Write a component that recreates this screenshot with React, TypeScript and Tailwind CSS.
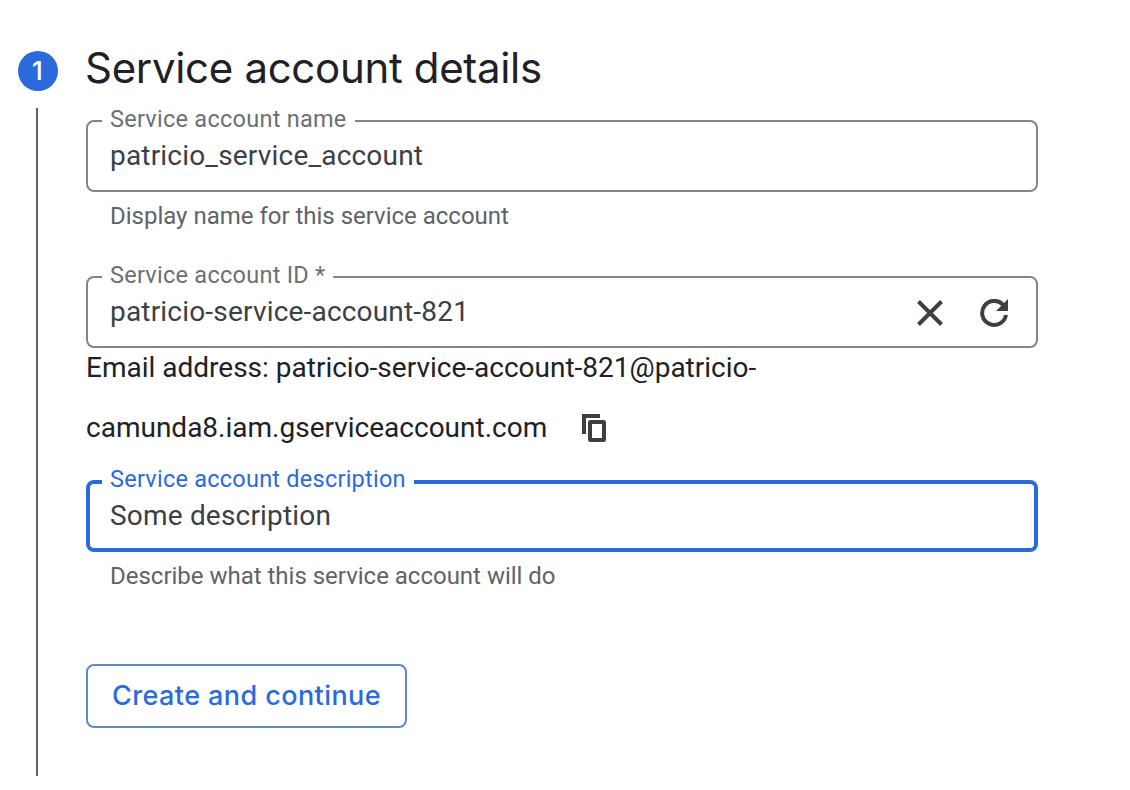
import type { ReactNode } from "react";

function CloseIcon() {
  return (
    <svg width="26" height="26" viewBox="0 0 26 26" fill="none" stroke="#3c4043" strokeWidth="4">
      <path d="M1.5 1.5 24.5 24.5M24.5 1.5 1.5 24.5" />
    </svg>
  );
}

function RefreshIcon() {
  return (
    <svg width="28" height="28" viewBox="0 0 28 28">
      <path d="M23.4 6.2A12 12 0 1 0 26 16" fill="none" stroke="#3c4043" strokeWidth="4" />
      <path d="M28 0V12H16Z" fill="#3c4043" />
    </svg>
  );
}

function CopyIcon() {
  return (
    <svg width="24" height="28" viewBox="0 0 24 28" fill="none" stroke="#3c4043">
      <path d="M18 2H2V20" strokeWidth="4" />
      <rect x="8" y="8" width="14" height="18" rx="0.5" strokeWidth="4" />
    </svg>
  );
}

type FieldProps = { label: string; value: string; focused?: boolean; actions?: ReactNode };

function Field({ label, value, focused, actions }: FieldProps) {
  return (
    <fieldset
      className={
        focused
          ? "h-[82px] w-full rounded-[8px] border-4 border-[#2a6adb] pl-3"
          : "h-[83px] w-full rounded-[8px] border-2 border-[#80868b] pl-3.5"
      }
    >
      <legend
        className={
          focused
            ? "h-6 px-2 text-[23.5px] leading-[18px] tracking-[0.24px] text-[#2a6adb]"
            : "h-6 px-2 text-[23.5px] leading-5 tracking-[0.26px] text-[#6b7075]"
        }
      >
        {label}
      </legend>
      <div className={focused ? "flex h-11 items-center justify-between pl-2" : "flex h-[46px] items-center justify-between pr-7 pl-2"}>
        <span className="text-[28px] leading-8 tracking-[0.19px] text-[#3c4043]">{value}</span>
        {actions}
      </div>
    </fieldset>
  );
}

export default function App() {
  return (
    <main className="flex h-[790px] w-[1130px] bg-white font-['Roboto',sans-serif]">
      <div className="flex w-[86px] shrink-0 flex-col pt-[51px] pl-[18px]">
        <div className="flex size-10 items-center justify-center rounded-full bg-[#2a6adb] pr-px pb-0.5 font-['Inter',sans-serif] text-[26px] font-medium text-white">
          1
        </div>
        <div className="mt-[17px] ml-[18px] h-[668px] w-0.5 bg-[#5f6368]" />
      </div>
      <div className="flex w-[952px] flex-col">
        <h1 className="mt-[40px] -ml-px h-[69px] font-['Inter',sans-serif] text-[42px] leading-[56px] font-normal tracking-[-0.32px] whitespace-nowrap text-[#202124]">
          Service account details
        </h1>
        <Field label="Service account name" value="patricio_service_account" />
        <p className="mt-2 h-8 pl-6 text-[24px] leading-8 tracking-[-0.01px] text-[#5f6368]">Display name for this service account</p>
        <div className="h-[33px]" />
        <Field
          label="Service account ID *"
          value="patricio-service-account-821"
          actions={
            <div className="flex items-center gap-[37px] pt-0.5">
              <CloseIcon />
              <RefreshIcon />
            </div>
          }
        />
        <div className="h-[122px] text-[28px] leading-[60px] text-[#202124]">
          <div className="-mt-[10px] h-[60px]">Email address: patricio-service-account-821@patricio-</div>
          <div className="flex h-[60px] items-center gap-[35px]">
            <span>camunda8.iam.gserviceaccount.com</span>
            <CopyIcon />
          </div>
        </div>
        <Field label="Service account description" value="Some description" focused />
        <p className="mt-2 h-8 pl-6 text-[24px] leading-8 tracking-[-0.01px] text-[#5f6368]">Describe what this service account will do</p>
        <button className="mt-[72px] flex h-16 w-[321px] items-center justify-center rounded-[8px] border-2 border-[#5f88cd] font-['Inter',sans-serif] text-[27px] font-medium tracking-[0.42px] whitespace-nowrap text-[#2a6adb]">
          Create and continue
        </button>
      </div>
    </main>
  );
}
